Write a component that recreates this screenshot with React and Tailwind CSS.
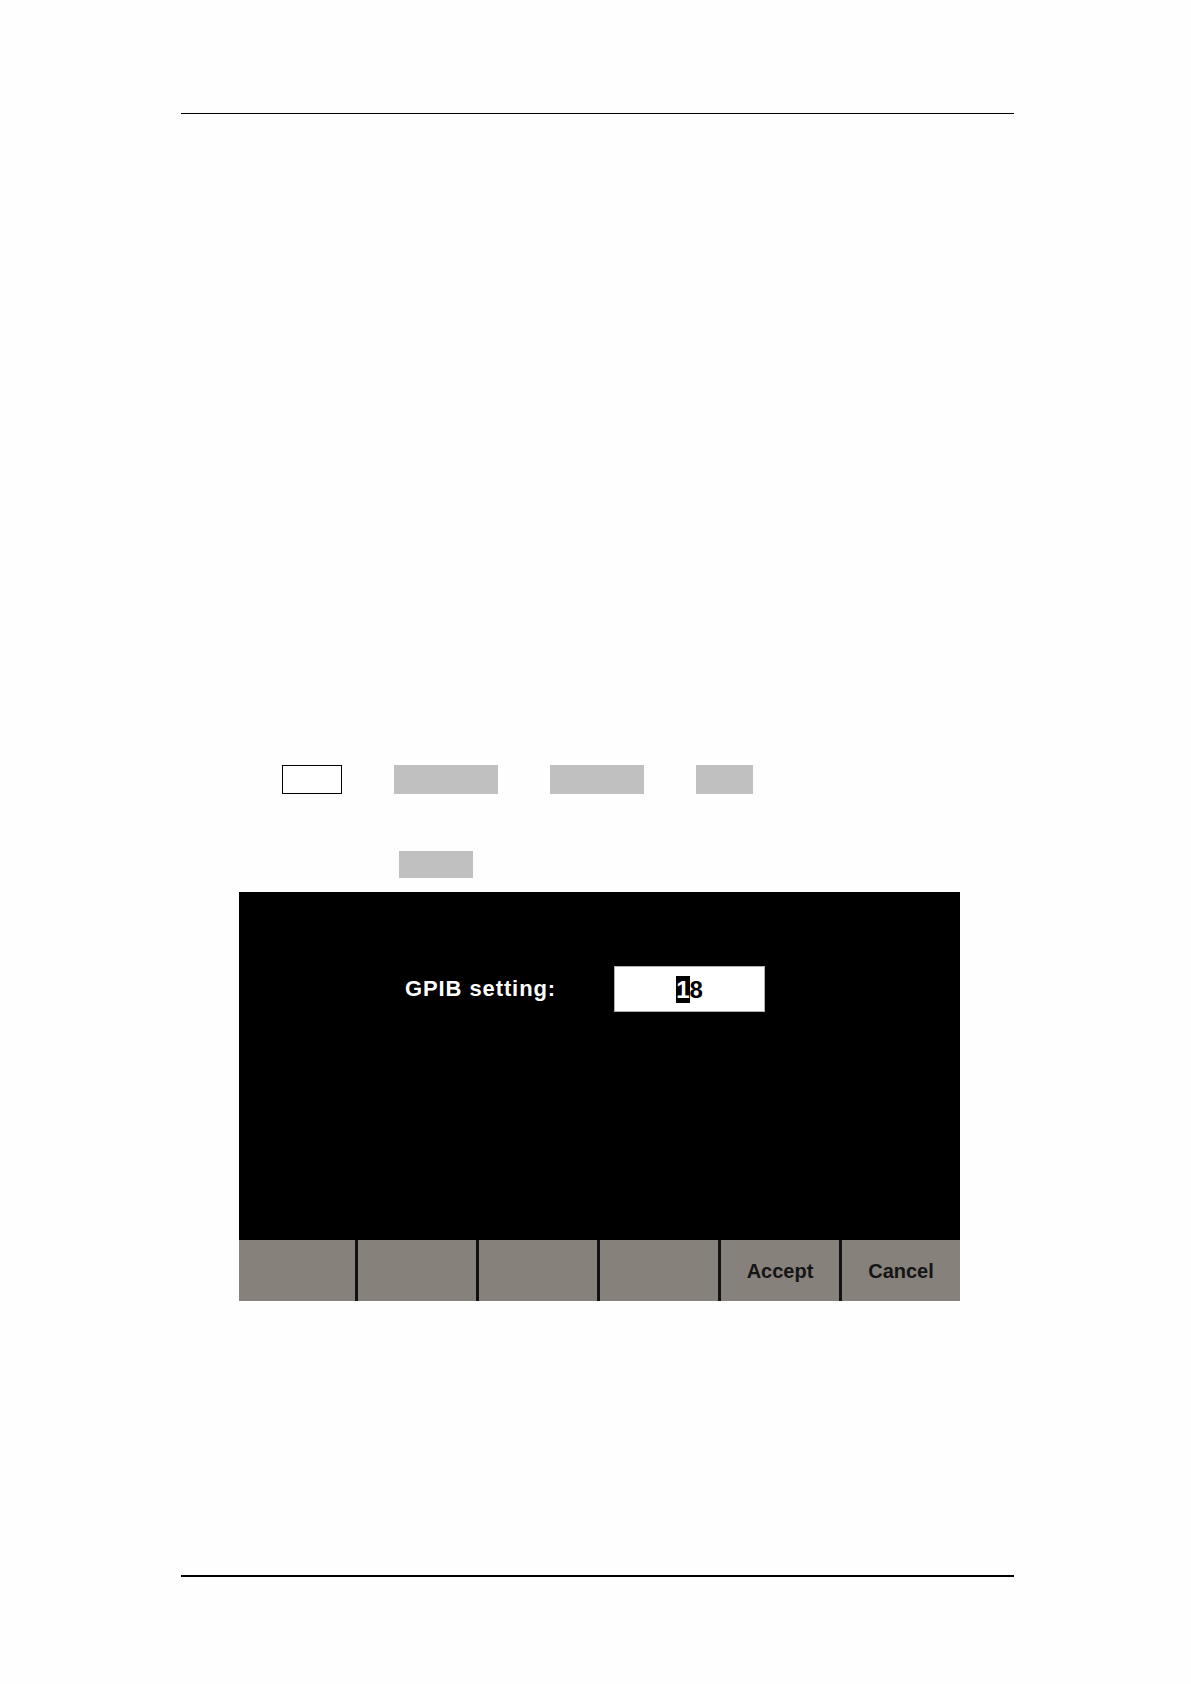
export default function App() {
  const softkeys = ["", "", "", "", "Accept", "Cancel"];

  return (
    <div className="w-[1191px] h-[1684px] bg-[#fefefe] font-['Liberation_Sans',Arial,sans-serif] overflow-hidden">
      {/* header rule */}
      <div className="pt-[113px] pl-[181px]">
        <div className="w-[833px] h-px bg-black" />

        {/* placeholder fields row */}
        <div className="flex mt-[651px]">
          <div className="ml-[101px] w-[60px] h-[29px] border border-black bg-white" />
          <div className="ml-[52px] w-[104px] h-[29px] bg-[#c0c0c0]" />
          <div className="ml-[52px] w-[94px] h-[29px] bg-[#c0c0c0]" />
          <div className="ml-[52px] w-[57px] h-[29px] bg-[#c0c0c0]" />
        </div>
        <div className="flex mt-[57px]">
          <div className="ml-[218px] w-[74px] h-[27px] bg-[#c0c0c0]" />
        </div>

        {/* instrument screen */}
        <div className="mt-[14px] ml-[58px] w-[721px]">
          <div className="h-[348px] bg-black pt-[74px]">
            <div className="flex items-center">
              <div className="ml-[166px] w-[209px] text-white text-[22px] font-bold tracking-[0.9px] leading-none">
                GPIB setting:
              </div>
              <div className="w-[151px] h-[46px] bg-white border border-[#b0b0b0] flex items-center justify-center">
                <span className="text-[24px] leading-[27px] text-black font-bold">
                  <span className="bg-black text-white">1</span>8
                </span>
              </div>
            </div>
          </div>
          <div className="flex h-[61px] bg-[#86817a]">
            {softkeys.map((label, i) => (
              <div
                key={i}
                className={`flex items-center justify-center text-[20px] font-bold text-[#151515] ${
                  i > 0 ? "flex-1 border-l-[3px] border-[#111]" : "w-[116px] shrink-0"
                }`}
              >
                {label}
              </div>
            ))}
          </div>
        </div>

        {/* footer rule */}
        <div className="mt-[274px] w-[833px] h-[2px] bg-black" />
      </div>
    </div>
  );
}
